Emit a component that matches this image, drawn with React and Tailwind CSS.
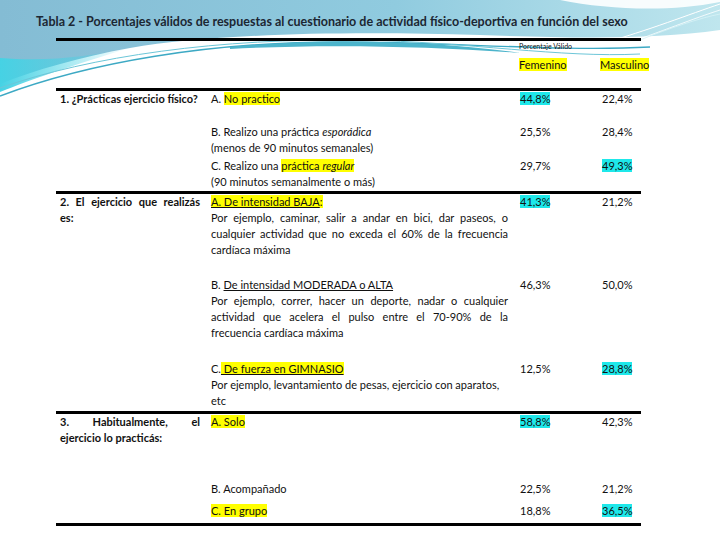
import React from "react";

const Y = ({ children }) => <span className="bg-[#ffff00]">{children}</span>;
const C = ({ children }) => <span className="bg-[#1ee8ea]">{children}</span>;

// one justified line, forced to the full width
const J = ({ children }) => (
  <div className="text-justify [text-align-last:justify]">{children}</div>
);

const Waves = () => (
  <svg className="absolute inset-0" width="720" height="540" viewBox="0 0 720 540">
    <defs>
      <linearGradient id="band" x1="0" y1="0" x2="1" y2="0">
        <stop offset="0" stopColor="#84bcd4" />
        <stop offset="0.55" stopColor="#90cbdf" />
        <stop offset="1" stopColor="#bfe6ee" />
      </linearGradient>
      <linearGradient id="glow" x1="0" y1="0" x2="1" y2="0">
        <stop offset="0" stopColor="#46d2e4" />
        <stop offset="1" stopColor="#46d2e4" stopOpacity="0" />
      </linearGradient>
    </defs>
    <path d="M0 0 H720 V30 C650 40 570 38 480 35 C340 31 210 34 130 48 C80 57 35 70 0 84 Z" fill="url(#band)" />
    <path d="M0 58 C50 62 90 56 130 48 C70 66 30 80 0 92 Z" fill="url(#glow)" />
    <path d="M0 96 C90 62 210 42 340 42 C450 42 560 52 650 47" stroke="#3da9c4" strokeWidth="1.4" fill="none" />
    <path d="M0 88 C90 56 220 38 360 40 C470 42 560 58 640 54" stroke="#6cc6d8" strokeWidth="1" fill="none" />
    <path d="M230 47 C320 38 430 40 520 53 C430 46 320 44 230 49 Z" fill="#4cb4cb" />
    <path d="M560 0 C610 10 670 12 720 2 V0 Z" fill="#ffffff" opacity="0.9" />
    <path d="M600 44 C650 30 690 14 720 4" stroke="#ffffff" strokeWidth="1" fill="none" />
    <path d="M620 46 C660 32 695 18 720 10" stroke="#ffffff" strokeWidth="0.8" fill="none" />
    <path d="M640 40 C670 28 700 18 720 14" stroke="#d8f2f6" strokeWidth="0.8" fill="none" />
  </svg>
);

const Opt = ({ children, fem, masc, className = "" }) => (
  <div className={"grid grid-cols-[306px_84px_45px] " + className}>
    <div className="pl-[5px] pr-[4px]">{children}</div>
    <div className="pl-[8px]">{fem}</div>
    <div className="pl-[6px] whitespace-nowrap">{masc}</div>
  </div>
);

const Row = ({ q, children, className = "" }) => (
  <div className={"flex border-t-[3px] border-black " + className}>
    <div className="w-[150px] shrink-0 pl-[4px] pr-[6px] font-bold">{q}</div>
    <div className="flex flex-col">{children}</div>
  </div>
);

export default function App() {
  return (
    <div className="relative w-[720px] h-[540px] bg-white overflow-hidden font-['Lato',sans-serif] text-[11px] leading-[16px] text-[#111]">
      <Waves />
      <div className="relative pt-[13px]">
        <h1 className="pl-[36px] text-[12.5px] leading-[18px] font-bold text-[#1c2733] whitespace-nowrap">
          Tabla 2 - Porcentajes válidos de respuestas al cuestionario de actividad físico-deportiva en función del sexo
        </h1>

        <div className="ml-[56px] w-[585px] mt-[7px]">
          {/* header */}
          <div className="border-t-[3px] border-black h-[50px]">
            <div className="ml-[463px] text-[7px] leading-[10px] whitespace-nowrap">Porcentaje Válido</div>
            <div className="flex mt-[6px] ml-[463px] whitespace-nowrap">
              <div className="w-[81px] shrink-0"><Y>Femenino</Y></div>
              <div className="shrink-0"><Y>Masculino</Y></div>
            </div>
          </div>

          {/* 1 */}
          <Row q="1. ¿Prácticas ejercicio físico?" className="pb-[1px]">
            <Opt fem={<C>44,8%</C>} masc="22,4%">
              A. <Y>No practico</Y>
            </Opt>
            <Opt className="mt-[17px]" fem="25,5%" masc="28,4%">
              <div>B. Realizo una práctica <i>esporádica</i></div>
              <div>(menos de 90 minutos semanales)</div>
            </Opt>
            <Opt className="mt-[2px]" fem="29,7%" masc={<C>49,3%</C>}>
              <div>C. Realizo una <Y>práctica <i>regular</i></Y></div>
              <div>(90 minutos semanalmente o más)</div>
            </Opt>
          </Row>

          {/* 2 */}
          <Row
            q={
              <>
                <J>2. El ejercicio que realizás</J>
                <div>es:</div>
              </>
            }
            className="pb-[2px]"
          >
            <Opt fem={<C>41,3%</C>} masc="21,2%">
              <div><Y><u>A. De intensidad BAJA</u>:</Y></div>
              <J>Por ejemplo, caminar, salir a andar en bici, dar paseos, o</J>
              <J>cualquier actividad que no exceda el 60% de la frecuencia</J>
              <div>cardíaca máxima</div>
            </Opt>
            <Opt className="mt-[19px]" fem="46,3%" masc="50,0%">
              <div>B. <u>De intensidad MODERADA o ALTA</u></div>
              <J>Por ejemplo, correr, hacer un deporte, nadar o cualquier</J>
              <J>actividad que acelera el pulso entre el 70-90% de la</J>
              <div>frecuencia cardíaca máxima</div>
            </Opt>
            <Opt className="mt-[20px]" fem="12,5%" masc={<C>28,8%</C>}>
              <div>C.<Y><u> De fuerza en GIMNASIO</u></Y></div>
              <div>Por ejemplo, levantamiento de pesas, ejercicio con aparatos,</div>
              <div>etc</div>
            </Opt>
          </Row>

          {/* 3 */}
          <Row
            q={
              <>
                <J>3. Habitualmente, el</J>
                <div>ejercicio lo practicás:</div>
              </>
            }
            className="pb-[4px] border-b-[3px]"
          >
            <Opt fem={<C>58,8%</C>} masc="42,3%">
              <Y>A. Solo</Y>
            </Opt>
            <Opt className="mt-[51px]" fem="22,5%" masc="21,2%">
              B. Acompañado
            </Opt>
            <Opt className="mt-[6px]" fem="18,8%" masc={<C>36,5%</C>}>
              <Y>C. En grupo</Y>
            </Opt>
          </Row>
        </div>
      </div>
    </div>
  );
}
